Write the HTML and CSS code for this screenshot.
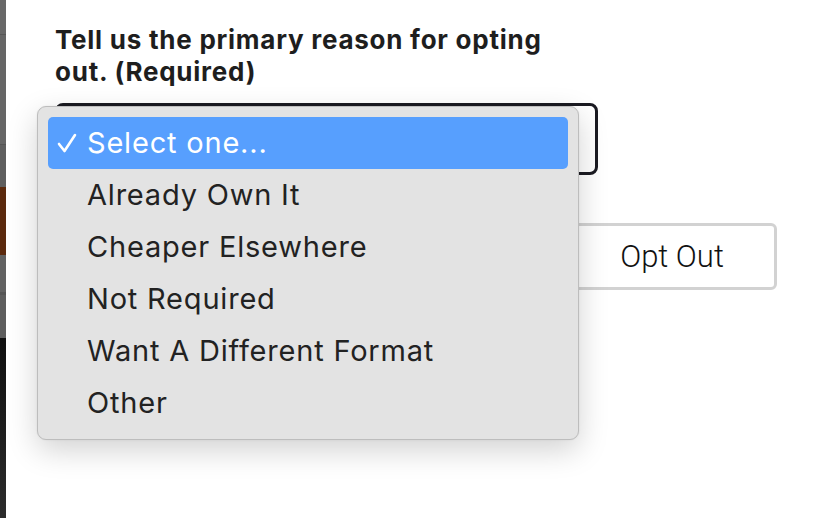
FILE: index.html
```html
<!DOCTYPE html>
<html lang="en">
<head>
<meta charset="utf-8">
<link rel="stylesheet" href="styles.css">
</head>
<body>
<div class="page">
  <div class="strip">
    <div class="seg s1"></div>
    <div class="seg s2"></div>
    <div class="seg s3"></div>
    <div class="seg s4"></div>
    <div class="seg s5"></div>
    <div class="seg s6"></div>
    <div class="seg s7"></div>
  </div>
  <main class="content">
    <label class="title">Tell us the primary reason for opting out. (Required)</label>
    <div class="select-box"></div>
    <div class="actions">
      <button class="opt-out">Opt Out</button>
    </div>
  </main>
  <ul class="menu">
    <li class="item selected"><svg class="check" width="22" height="22" viewBox="0 0 22 22"><polyline points="3,12 8.5,19 19,3" fill="none" stroke="#ffffff" stroke-width="2.6" stroke-linecap="round" stroke-linejoin="round"/></svg>Select one...</li>
    <li class="item">Already Own It</li>
    <li class="item">Cheaper Elsewhere</li>
    <li class="item">Not Required</li>
    <li class="item">Want A Different Format</li>
    <li class="item">Other</li>
  </ul>
</div>
</body>
</html>
```
FILE: styles.css
```css
* { box-sizing: border-box; }
html, body {
  margin: 0;
  padding: 0;
  background: #ffffff;
}
.page {
  position: relative;
  display: flex;
  width: 840px;
  height: 518px;
  overflow: hidden;
  background: #ffffff;
}
.strip {
  width: 6px;
  display: flex;
  flex-direction: column;
  flex: none;
}
.seg { width: 6px; }
.s1 { height: 35px; background: #686868; border-bottom: 1px solid #575757; }
.s2 { height: 110px; background: #666666; border-bottom: 1px solid #555555; }
.s3 { height: 42px; background: #5f5f5f; }
.s4 { height: 68px; background: #5c2a0e; }
.s5 { height: 40px; background: #626262; border-bottom: 3px solid #555555; }
.s6 { height: 43px; background: #5e5e5e; }
.s7 { flex: 1; background: linear-gradient(#101010, #2c2c2c); }

.content {
  padding: 24px 0 0 49px;
  display: flex;
  flex-direction: column;
}
.title {
  display: block;
  width: 520px;
  font-family: Inter, Roboto, sans-serif;
  font-weight: 700;
  font-size: 26px;
  letter-spacing: 0.75px;
  line-height: 32px;
  color: #1e1e1e;
}
.select-box {
  margin-top: 15px;
  width: 543px;
  height: 72px;
  border: 3px solid #1b1b22;
  border-radius: 8px;
}
.actions {
  margin-top: 48px;
  width: 722px;
  display: flex;
  justify-content: flex-end;
}
.opt-out {
  width: 210px;
  height: 67px;
  background: #ffffff;
  border: 3px solid #d2d2d2;
  border-radius: 6px;
  font-family: Roboto, "Liberation Sans", sans-serif;
  font-weight: 300;
  font-size: 31px;
  color: #111111;
  padding: 0;
}

.menu {
  position: absolute;
  left: 37px;
  top: 106px;
  width: 542px;
  margin: 0;
  padding: 10px;
  list-style: none;
  background: #e3e3e3;
  border: 1px solid #bdbdbd;
  border-radius: 9px;
  box-shadow: 0 10px 30px rgba(0, 0, 0, 0.18), 0 0 2px rgba(0, 0, 0, 0.08);
}
.item {
  position: relative;
  height: 52px;
  line-height: 52px;
  padding-left: 39px;
  font-family: Inter, Roboto, sans-serif;
  font-size: 29px;
  letter-spacing: 0.8px;
  color: #222222;
  border-radius: 5px;
  white-space: nowrap;
}
.item.selected {
  background: #579ffe;
  color: #ffffff;
}
.check {
  position: absolute;
  left: 8px;
  top: 15px;
}
```
